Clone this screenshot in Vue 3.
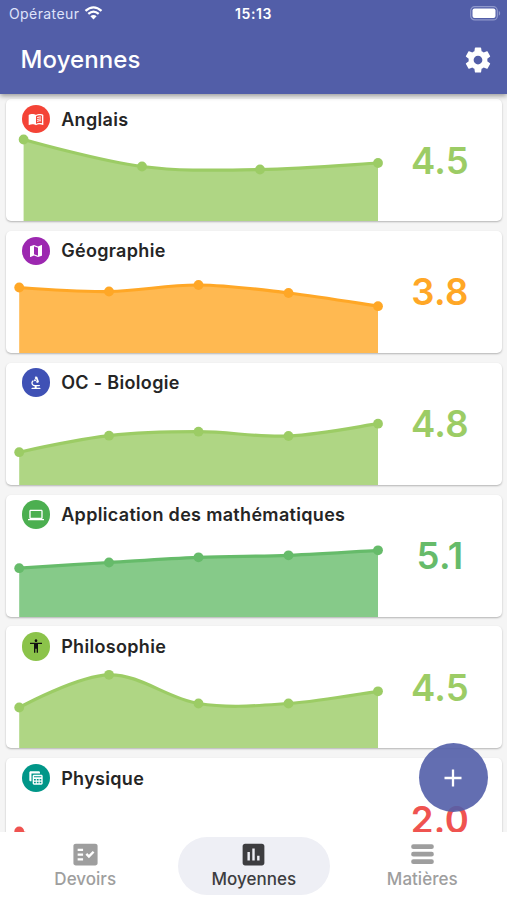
<script setup>
const icons = {
  book: 'M21 5c-1.11-.35-2.33-.5-3.5-.5-1.95 0-4.05.4-5.5 1.5-1.45-1.1-3.55-1.5-5.5-1.5S2.45 4.9 1 6v14.65c0 .25.25.5.5.5.1 0 .15-.05.25-.05C3.1 20.45 5.05 20 6.5 20c1.95 0 4.05.4 5.5 1.5 1.35-.85 3.8-1.5 5.5-1.5 1.65 0 3.35.3 4.75 1.05.1.05.15.05.25.05.25 0 .5-.25.5-.5V6c-.6-.45-1.25-.75-2-1zm0 13.5c-1.1-.35-2.3-.5-3.5-.5-1.7 0-4.15.65-5.5 1.5V8c1.35-.85 3.8-1.5 5.5-1.5 1.2 0 2.4.15 3.5.5v11.5zM13.7 9.2c1.8-.8 4-1 6-.6v1.5c-2-.4-4.2-.2-6 .7zm0 2.8c1.8-.8 4-1 6-.6v1.5c-2-.4-4.2-.2-6 .7zm0 2.8c1.8-.8 4-1 6-.6v1.5c-2-.4-4.2-.2-6 .7z',
  map: 'M20.5 3l-.16.03L15 5.1 9 3 3.36 4.9c-.21.07-.36.25-.36.48V20.5c0 .28.22.5.5.5l.16-.03L9 18.9l6 2.1 5.64-1.9c.21-.07.36-.25.36-.48V3.5c0-.28-.22-.5-.5-.5zM15 19l-6-2.11V5l6 2.11V19z',
  biotech: 'M7 19c-1.1 0-2 .9-2 2h14c0-1.1-.9-2-2-2h-4v-2h3c1.1 0 2-.9 2-2h-8c-1.66 0-3-1.34-3-3 0-1.09.59-2.04 1.46-2.56C8.17 9.03 8 8.54 8 8c0-.21.04-.42.09-.62C6.28 8.13 5 9.92 5 12c0 2.76 2.24 5 5 5v2H7zM10.56 5.51C11.91 5.54 13 6.64 13 8c0 .75-.33 1.41-.85 1.87l.59 1.62.94-.34.34.94 1.88-.68-.34-.94.94-.34L13.76 2.6l-.94.34L12.48 2l-1.88.68.34.94-.94.35zM10.5 6.5a1.5 1.5 0 1 0 0 3 1.5 1.5 0 0 0 0-3z',
  laptop: 'M20 18c1.1 0 1.99-.9 1.99-2L22 6c0-1.1-.9-2-2-2H4c-1.1 0-2 .9-2 2v10c0 1.1.9 2 2 2H0v2h24v-2h-4zM4 6h16v10H4V6z',
  person: 'M12 2c1.1 0 2 .9 2 2s-.9 2-2 2-2-.9-2-2 .9-2 2-2zm9 7h-6v13h-2v-6h-2v6H9V9H3V7h18v2z',
  tables: 'M4 2h12c1.1 0 2 .9 2 2v1.200H5.200V17H4c-1.100 0-2-.9-2-2V4c0-1.100.9-2 2-2zM9 7h11c1.100 0 2 .9 2 2v11c0 1.100-.9 2-2 2H9c-1.100 0-2-.9-2-2V9c0-1.100.9-2 2-2zm0 2.500v1.500h11V9.500zm0 3.900v2.200h2.700v-2.200zm4.200 0v2.200h2.700v-2.200zm4.200 0v2.200H20v-2.200zM9 17.500v2.200h2.700v-2.200zm4.200 0v2.200h2.700v-2.200zm4.200 0v2.200H20v-2.200z'
}

const five = [13.2, 103, 192.5, 282.5, 372]
const subjects = [
  { name: 'Anglais', score: '4.5', icon: 'book', badge: '#f44336', tone: 'lime', xs: [17.6, 136, 254, 372], ys: [40.5, 67.5, 70.5, 64] },
  { name: 'Géographie', score: '3.8', icon: 'map', badge: '#9c27b0', tone: 'orange', xs: five, ys: [56.5, 60.5, 54, 62, 75.2] },
  { name: 'OC - Biologie', score: '4.8', icon: 'biotech', badge: '#3f51b5', tone: 'lime', xs: five, ys: [89.2, 72.7, 68.7, 73, 60.7] },
  { name: 'Application des mathématiques', score: '5.1', icon: 'laptop', badge: '#4caf50', tone: 'green', xs: five, ys: [73.2, 67.5, 62.3, 60.3, 55.3] },
  { name: 'Philosophie', score: '4.5', icon: 'person', badge: '#8bc34a', dark: true, tone: 'lime', xs: five, ys: [81.5, 48.8, 77.5, 77.5, 65.3] },
  { name: 'Physique', score: '2.0', icon: 'tables', badge: '#009688', tone: 'red', xs: five, ys: [73.5, 98, 104, 108, 112] }
]

// Smooth line: every segment takes its tangents from the neighbouring points.
function linePath({ xs, ys }) {
  const k = 0.35 / 2
  let tx = 0
  let ty = 0
  let d = `M${xs[0]} ${ys[0]}`
  for (let i = 1; i < xs.length; i++) {
    const n = Math.min(i + 1, xs.length - 1)
    const c1 = `${xs[i - 1] + tx} ${ys[i - 1] + ty}`
    tx = (xs[n] - xs[i - 1]) * k
    ty = (ys[n] - ys[i - 1]) * k
    d += `C${c1} ${xs[i] - tx} ${ys[i] - ty} ${xs[i]} ${ys[i]}`
  }
  return d
}
const areaPath = (s) => `${linePath(s)}V122H${s.xs[0]}Z`
</script>

<template>
  <div class="screen">
    <header class="top">
      <div class="status">
        <div class="carrier">
          <span>Opérateur</span>
          <svg class="wifi" viewBox="0 0 18 14">
            <path d="M1 4.900Q9-2.200 17 4.900" />
            <path d="M3.800 7.900Q9 3.300 14.200 7.900" />
            <path class="tip" d="M5.900 10.200Q9 7.600 12.100 10.200L9 13.600Z" />
          </svg>
        </div>
        <time>15:13</time>
        <div class="power">
          <svg viewBox="0 0 31 15">
            <rect class="shell" x=".7" y=".7" width="26.600" height="13.200" rx="4" />
            <rect class="charge" x="2.500" y="2.500" width="23" height="9.600" rx="2" />
            <path class="nub" d="M28.800 5c1.800.7 1.800 4 0 4.700z" />
          </svg>
        </div>
      </div>
      <div class="bar">
        <h1>Moyennes</h1>
        <svg class="gear" viewBox="0 0 24 24">
          <path d="M19.430 12.980c.04-.32.07-.64.07-.98s-.03-.66-.07-.98l2.110-1.650c.19-.15.24-.42.12-.64l-2-3.460c-.12-.22-.39-.3-.61-.22l-2.490 1c-.52-.4-1.080-.73-1.690-.98l-.38-2.650C14.460 2.180 14.250 2 14 2h-4c-.25 0-.46.18-.49.42l-.38 2.650c-.61.25-1.170.59-1.690.98l-2.490-1c-.23-.09-.49 0-.61.22l-2 3.460c-.13.22-.07.49.12.64l2.110 1.650c-.04.32-.07.65-.07.98s.03.66.07.98l-2.110 1.650c-.19.15-.24.42-.12.64l2 3.460c.12.22.39.3.61.22l2.490-1c.52.4 1.080.73 1.690.98l.38 2.650c.03.24.24.42.49.42h4c.25 0 .46-.18.49-.42l.38-2.650c.61-.25 1.170-.59 1.690-.98l2.490 1c.23.09.49 0 .61-.22l2-3.460c.12-.22.07-.49-.12-.64l-2.110-1.650zM12 15.500c-1.930 0-3.500-1.570-3.500-3.500s1.570-3.500 3.500-3.500 3.500 1.570 3.500 3.500-1.570 3.500-3.500 3.500z" />
        </svg>
      </div>
    </header>

    <main class="list">
      <article v-for="s in subjects" :key="s.name" class="card" :class="s.tone">
        <svg class="chart" viewBox="0 0 380 122">
          <path class="area" :d="areaPath(s)" />
          <path class="line" :d="linePath(s)" />
          <circle v-for="(x, i) in s.xs" :key="x" :cx="x" :cy="s.ys[i]" r="4.900" />
        </svg>
        <div class="subject">
          <span class="badge" :class="{ dark: s.dark }" :style="{ background: s.badge }">
            <svg viewBox="0 0 24 24"><path fill-rule="evenodd" :d="icons[s.icon]" /></svg>
          </span>
          <h2>{{ s.name }}</h2>
        </div>
        <strong class="score">{{ s.score }}</strong>
      </article>
    </main>

    <button class="fab" aria-label="+">
      <svg viewBox="0 0 18 18"><path d="M9 .5v17M.5 9h17" /></svg>
    </button>

    <nav class="tabs">
      <a class="tab">
        <svg viewBox="0 0 24 24"><path d="M20 3H4c-1.100 0-2 .6-2 1.700v14.600c0 1.100.9 1.700 2 1.700h16c1.100 0 2-.6 2-1.700V4.700C22 3.600 21.100 3 20 3zM10 17H5.500v-1.800H10zm0-4H5.500v-1.800H10zm0-4H5.500V7.200H10zm4.820 6L12 12.160l1.410-1.410 1.410 1.420L17.990 9l1.420 1.420z" /></svg>
        <span>Devoirs</span>
      </a>
      <a class="tab active">
        <svg viewBox="0 0 24 24"><path d="M19 3H5c-1.100 0-2 .9-2 2v14c0 1.100.9 2 2 2h14c1.100 0 2-.9 2-2V5c0-1.100-.9-2-2-2zM9 17H7v-7h2zm4 0h-2V7h2zm4 0h-2v-4h2z" /></svg>
        <span>Moyennes</span>
      </a>
      <a class="tab">
        <svg class="rows" viewBox="0 0 24 24"><path d="M4.500 5.500h15M4.500 11.700h15M4.500 17.900h15" /></svg>
        <span>Matières</span>
      </a>
    </nav>
  </div>
</template>

<style>
body {
  margin: 0;
  background: #f5f5f5;
}
</style>

<style scoped>
.screen {
  position: relative;
  display: flex;
  flex-direction: column;
  width: 507px;
  height: 900px;
  overflow: hidden;
  background: #f5f5f5;
  color: #252525;
  font-family: Inter, "Liberation Sans", sans-serif;
}
.top {
  z-index: 1;
  flex: none;
  height: 94px;
  background: #525ea8;
  color: #fff;
  box-shadow: 0 2px 5px rgba(0, 0, 0, 0.38);
}
.status {
  display: grid;
  grid-template-columns: 1fr auto 1fr;
  align-items: center;
  height: 27px;
  padding: 0 6px 0 9px;
}
.carrier {
  display: flex;
  align-items: center;
  gap: 5px;
  color: #dfe3fa;
  font-size: 14px;
  letter-spacing: 0.4px;
}
.wifi {
  width: 19px;
  height: 14px;
  margin-top: -1px;
  fill: none;
  stroke: #fff;
  stroke-width: 2.3;
}
.wifi .tip {
  fill: #fff;
  stroke: none;
}
time {
  margin-right: 3px;
  font-size: 14px;
  font-weight: 600;
  letter-spacing: 0.6px;
}
.power {
  display: flex;
  justify-content: flex-end;
}
.power svg {
  width: 31px;
  height: 15px;
}
.shell {
  fill: none;
  stroke: #8f98cb;
  stroke-width: 1.2;
}
.charge {
  fill: #fff;
}
.nub {
  fill: #8f98cb;
}
.bar {
  display: flex;
  align-items: center;
  justify-content: space-between;
  height: 65px;
  padding: 0 14px 0 20.5px;
}
h1 {
  margin: 0;
  font-size: 24px;
  font-weight: 500;
  letter-spacing: 0.1px;
}
.gear {
  width: 30px;
  height: 30px;
  fill: #fff;
}
.list {
  display: flex;
  flex: 1;
  flex-direction: column;
  gap: 9.85px;
  min-height: 0;
  padding: 5px 5px 0 6px;
  overflow: hidden;
}
.card {
  display: grid;
  flex: none;
  grid-template: 40px 82px / 372px 1fr;
  height: 122px;
  border-radius: 5px;
  background: #fff;
  box-shadow: 0 1px 2px rgba(0, 0, 0, 0.27);
}
.lime { --tone: #9ccc65; --fill: #afd684; }
.orange { --tone: #ffa726; --fill: #ffb951; }
.green { --tone: #66bb6a; --fill: #86ca89; }
.red { --tone: #ef5350; --fill: #f27573; }
.chart {
  grid-area: 1 / 1 / 3 / 2;
  width: 380px;
  height: 122px;
}
.area {
  fill: var(--fill);
}
.line {
  fill: none;
  stroke: var(--tone);
  stroke-width: 3.2;
}
.chart circle {
  fill: var(--tone);
}
.subject {
  z-index: 1;
  display: flex;
  grid-area: 1 / 1 / 2 / 3;
  align-items: center;
  gap: 10.8px;
  padding-left: 16px;
}
.badge {
  display: grid;
  width: 28.4px;
  height: 28.4px;
  border-radius: 50%;
  place-items: center;
}
.badge svg {
  width: 16px;
  height: 16px;
  fill: #fff;
}
.badge.dark svg {
  fill: #111;
}
h2 {
  margin: 0;
  font-size: 18px;
  font-weight: 600;
  letter-spacing: 0.32px;
}
.score {
  grid-area: 1 / 2 / 3 / 3;
  align-self: center;
  padding-top: 1px;
  color: var(--tone);
  font-size: 36.5px;
  font-weight: 600;
  letter-spacing: 0.3px;
  text-align: center;
}
.fab {
  position: absolute;
  right: 19.5px;
  bottom: 88px;
  z-index: 2;
  display: grid;
  width: 69px;
  height: 69px;
  padding: 0;
  border: 0;
  border-radius: 50%;
  background: rgba(82, 94, 168, 0.9);
  place-items: center;
}
.fab svg {
  width: 18px;
  height: 18px;
  fill: none;
  stroke: #fff;
  stroke-width: 2.3;
}
.tabs {
  z-index: 1;
  display: grid;
  flex: none;
  grid-template-columns: repeat(3, 152px);
  justify-content: center;
  gap: 16.5px;
  height: 63px;
  padding-top: 5px;
  background: #fff;
}
.tab {
  display: flex;
  flex-direction: column;
  align-items: center;
  height: 58px;
  padding: 3px 0 0 0.5px;
  box-sizing: border-box;
  border-radius: 29px;
  color: #9e9e9e;
  font-size: 17px;
  font-weight: 500;
  letter-spacing: 0.02px;
  line-height: 21px;
}
.tab svg {
  width: 29px;
  height: 29px;
  fill: currentColor;
}
.tab .rows {
  fill: none;
  stroke: currentColor;
  stroke-linecap: round;
  stroke-width: 3.8;
}
.active {
  background: #eeeff5;
  color: #3d3d40;
}
</style>
